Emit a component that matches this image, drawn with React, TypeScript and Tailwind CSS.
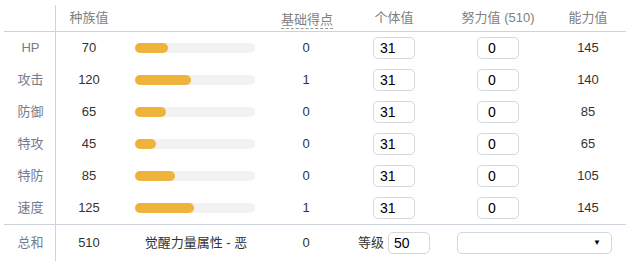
import React from "react";

const STATS = [
  { label: "HP", base: 70, pts: 0, iv: 31, ev: 0, total: 145 },
  { label: "攻击", base: 120, pts: 1, iv: 31, ev: 0, total: 140 },
  { label: "防御", base: 65, pts: 0, iv: 31, ev: 0, total: 85 },
  { label: "特攻", base: 45, pts: 0, iv: 31, ev: 0, total: 65 },
  { label: "特防", base: 85, pts: 0, iv: 31, ev: 0, total: 105 },
  { label: "速度", base: 125, pts: 1, iv: 31, ev: 0, total: 145 },
];

const cols = "grid grid-cols-[52px_66px_148px_72px_104px_104px_76px]";

function Box({ value, className = "" }: { value: string | number; className?: string }) {
  return (
    <div
      className={`h-[22px] w-[42px] rounded-[5px] border border-[#d3d7dd] bg-white flex items-center text-[14px] text-black ${className}`}
    >
      {value}
    </div>
  );
}

export default function App() {
  return (
    <div
      className="w-[641px] h-[262px] bg-white overflow-hidden text-[13px] text-[#333]"
      style={{ fontFamily: '"Liberation Sans", "Noto Sans CJK SC", sans-serif' }}
    >
      <div className="ml-[4px] w-[622px] pt-[5px]">
        {/* header */}
        <div className={`${cols} h-[27px] border-b border-[#cdd3dc] text-[#808080]`}>
          <div className="border-r border-[#cdd3dc]" />
          <div className="flex items-center justify-center">种族值</div>
          <div />
          <div className="flex items-center justify-center pl-[2px]">
            <span className="border-b border-dashed border-[#9a9a9a] leading-[16px] mt-[4px]">基础得点</span>
          </div>
          <div className="flex items-center justify-center">个体值</div>
          <div className="flex items-center justify-center">努力值 (510)</div>
          <div className="flex items-center justify-center">能力值</div>
        </div>

        {/* stat rows */}
        <div className="border-b border-[#cdd3dc]">
          {STATS.map((s) => (
            <div key={s.label} className={`${cols} h-[32px]`}>
              <div className="flex items-center justify-center pl-[2px] text-[#737d8a] border-r border-[#cdd3dc]">{s.label}</div>
              <div className="flex items-center justify-center">{s.base}</div>
              <div className="flex items-center pl-[13px]">
                <div className="h-[10px] w-[120px] rounded-full bg-[#f2f2f2]">
                  <div className="h-full rounded-full bg-[#efb33b]" style={{ width: `${(s.base / 255) * 120}px` }} />
                </div>
              </div>
              <div className="flex items-center justify-center">{s.pts}</div>
              <div className="flex items-center justify-center">
                <Box value={s.iv} className="pl-[6px]" />
              </div>
              <div className="flex items-center justify-center">
                <Box value={s.ev} className="pl-[10px]" />
              </div>
              <div className="flex items-center justify-center">{s.total}</div>
            </div>
          ))}
        </div>

        {/* totals */}
        <div className={`${cols} h-[36px]`}>
          <div className="flex items-center justify-center pl-[2px] text-[#737d8a] border-r border-[#cdd3dc]">总和</div>
          <div className="flex items-center justify-center">510</div>
          <div className="flex items-center justify-center">觉醒力量属性 - 恶</div>
          <div className="flex items-center justify-center">0</div>
          <div className="flex items-center justify-center gap-[4px]">
            <span>等级</span>
            <Box value={50} className="w-[41px] h-[21px] pl-[5px]" />
          </div>
          <div className="col-span-2 flex items-center pl-[11px]">
            <div className="h-[22px] w-[155px] rounded-[5px] border border-[#d3d7dd] bg-white flex items-center justify-end pr-[10px] text-[8px] text-black">
              ▼
            </div>
          </div>
        </div>
      </div>
    </div>
  );
}
